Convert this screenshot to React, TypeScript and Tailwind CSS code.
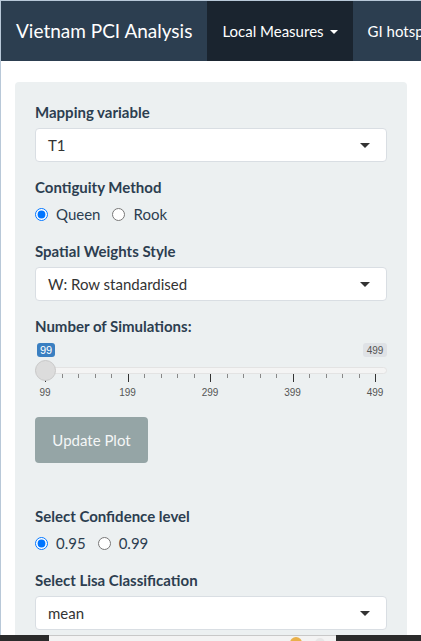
import React from "react";

const font = { fontFamily: "Lato, 'Open Sans', sans-serif" };

function Select({ value }: { value: string }) {
  return (
    <div className="flex h-[34px] items-center justify-between rounded-[4px] border border-[#d9dee3] bg-white pl-[12px] pr-[16px] text-[15px] text-[#333]">
      <span>{value}</span>
      <span className="h-0 w-0 border-x-[5px] border-t-[5px] border-x-transparent border-t-[#333]" />
    </div>
  );
}

function Label({ children, mb = true }: { children: React.ReactNode; mb?: boolean }) {
  return (
    <div className={`h-[21px] text-[15px] font-bold leading-[21px] text-[#2c3e50] ${mb ? "mb-[5px]" : ""}`}>
      {children}
    </div>
  );
}

function Radios({ name, options, checked }: { name: string; options: string[]; checked: string }) {
  return (
    <div className="flex h-[23px] items-center gap-[12px] text-[15px] text-[#2c3e50]">
      {options.map((o) => (
        <label key={o} className="flex items-center gap-[8px]">
          <input
            type="radio"
            name={name}
            defaultChecked={o === checked}
            className="m-0 h-[13px] w-[13px]"
          />
          <span>{o}</span>
        </label>
      ))}
    </div>
  );
}

function Slider() {
  const majors = [99, 199, 299, 399, 499];
  const left0 = 10;
  const span = 330;
  const ticks: { x: number; major: boolean }[] = [];
  for (let i = 0; i <= 20; i++) {
    ticks.push({ x: left0 + (span * i) / 20, major: i % 5 === 0 });
  }
  return (
    <div className="relative h-[65px]" style={{ fontFamily: "'Liberation Sans', Arial, sans-serif" }}>
      <div className="absolute left-[2px] top-[6px] flex h-[14px] w-[18px] items-center justify-center rounded-[3px] bg-[#3a7fc1] text-[11px] text-white">
        99
      </div>
      <div className="absolute right-0 top-[6px] flex h-[14px] w-[24px] items-center justify-center rounded-[3px] bg-[#dfe2e6] text-[10px] text-[#555]">
        499
      </div>
      <div className="absolute left-0 right-0 top-[30px] h-[7px] rounded-[4px] border border-[#e3e3e3] bg-[#f4f4f4]" />
      {ticks.map((t, i) => (
        <div
          key={i}
          className={`absolute top-[37px] w-px ${t.major ? "h-[8px] bg-[#333]" : "h-[4px] bg-[#888]"}`}
          style={{ left: t.x }}
        />
      ))}
      {majors.map((m, i) => (
        <div
          key={m}
          className="absolute top-[50px] w-[30px] text-center text-[10px] leading-[12px] text-[#555]"
          style={{ left: left0 + (span * i) / 4 - 15 }}
        >
          {m}
        </div>
      ))}
      <div className="absolute left-0 top-[23px] h-[21px] w-[21px] rounded-full border border-[#c8c8c8] bg-[#dcdcdc]" />
    </div>
  );
}

export default function App() {
  return (
    <div className="min-h-[700px] overflow-hidden border-l border-t border-[#b8c8d8] bg-white" style={font}>
      <nav className="flex h-[60px] items-stretch overflow-hidden whitespace-nowrap bg-[#2c3e50] text-white">
        <div className="flex shrink-0 items-center px-[15px] text-[19px]">Vietnam PCI Analysis</div>
        <div className="flex shrink-0 items-center gap-[6px] bg-[#1a242f] px-[15px] text-[15px]">
          <span>Local Measures</span>
          <span className="mt-[2px] h-0 w-0 border-x-[4px] border-t-[4px] border-x-transparent border-t-white" />
        </div>
        <div className="flex shrink-0 items-center px-[15px] text-[15px]">GI hotspot</div>
      </nav>
      <div className="px-[14px] pt-[21px]">
        <div className="rounded-[4px] border border-transparent bg-[#ecf0f1] px-[19px] pb-[40px] pt-[19px]">
          <Label>Mapping variable</Label>
          <Select value="T1" />
          <div className="mt-[15px]">
            <Label>Contiguity Method</Label>
            <Radios name="cont" options={["Queen", "Rook"]} checked="Queen" />
          </div>
          <div className="mt-[15px]">
            <Label>Spatial Weights Style</Label>
            <Select value="W: Row standardised" />
          </div>
          <div className="mt-[15px]">
            <Label mb={false}>Number of Simulations:</Label>
            <Slider />
          </div>
          <button className="mt-[15px] flex h-[46px] w-[113px] items-center justify-center rounded-[4px] bg-[#95a5a6] text-[15px] text-[#f4f6f6]">
            Update Plot
          </button>
          <div className="mt-[43px]">
            <Label>Select Confidence level</Label>
            <Radios name="conf" options={["0.95", "0.99"]} checked="0.95" />
          </div>
          <div className="mt-[15px]">
            <Label>Select Lisa Classification</Label>
            <Select value="mean" />
          </div>
        </div>
      </div>
      <div className="fixed bottom-0 left-0 right-0 flex h-[6px] bg-[#2b2b2b]">
        <div className="w-[49px]" />
        <div className="relative w-[287px] overflow-hidden border-t border-[#c8c8c8] bg-[#f3f3f3]">
          <div className="absolute left-[241px] top-[1px] h-[12px] w-[12px] rounded-full bg-[#e9b04a]" />
          <div className="absolute left-[266px] top-[2px] h-[10px] w-[10px] rounded-full bg-[#e6e6e6]" />
        </div>
      </div>
    </div>
  );
}
